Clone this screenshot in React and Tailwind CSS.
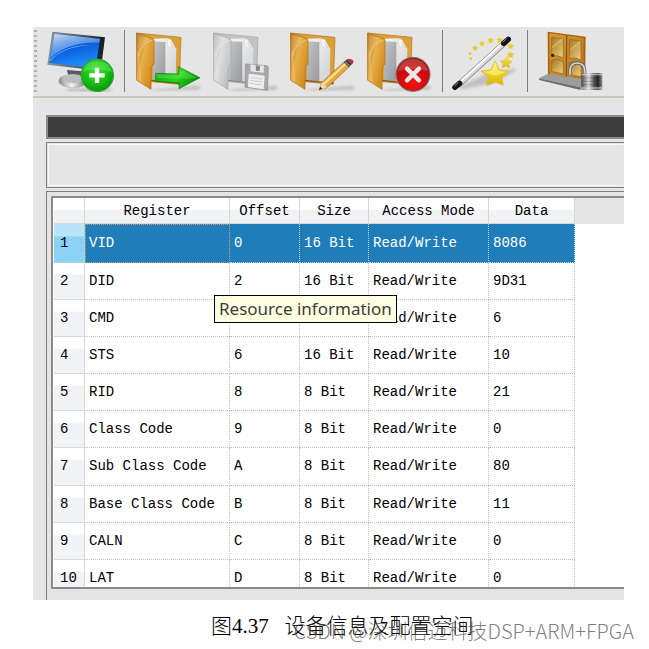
import React, { useState } from "react";

const registers = [
  { name: "VID", offset: "0", size: "16 Bit", mode: "Read/Write", data: "8086" },
  { name: "DID", offset: "2", size: "16 Bit", mode: "Read/Write", data: "9D31" },
  { name: "CMD", offset: "4", size: "16 Bit", mode: "Read/Write", data: "6" },
  { name: "STS", offset: "6", size: "16 Bit", mode: "Read/Write", data: "10" },
  { name: "RID", offset: "8", size: "8 Bit", mode: "Read/Write", data: "21" },
  { name: "Class Code", offset: "9", size: "8 Bit", mode: "Read/Write", data: "0" },
  { name: "Sub Class Code", offset: "A", size: "8 Bit", mode: "Read/Write", data: "80" },
  { name: "Base Class Code", offset: "B", size: "8 Bit", mode: "Read/Write", data: "11" },
  { name: "CALN", offset: "C", size: "8 Bit", mode: "Read/Write", data: "0" },
  { name: "LAT", offset: "D", size: "8 Bit", mode: "Read/Write", data: "0" },
];

// All the gradients live in one hidden svg so that every icon can share them
const IconDefs = () => (
  <svg className="absolute h-0 w-0" aria-hidden="true">
    <defs>
      <linearGradient id="screen" x1="0" y1="0" x2="0.3" y2="1">
        <stop offset="0" stopColor="#0b3fae" />
        <stop offset="0.5" stopColor="#0a5fdc" />
        <stop offset="1" stopColor="#1c8dfa" />
      </linearGradient>
      <linearGradient id="gloss" x1="0" y1="0" x2="0.6" y2="1">
        <stop offset="0" stopColor="#e8f3ff" stopOpacity="0.9" />
        <stop offset="1" stopColor="#6db0f8" stopOpacity="0.25" />
      </linearGradient>
      <linearGradient id="bezel" x1="0" y1="0" x2="1" y2="0">
        <stop offset="0" stopColor="#8b979c" />
        <stop offset="0.6" stopColor="#4d585c" />
        <stop offset="1" stopColor="#15191b" />
      </linearGradient>
      <linearGradient id="metal" x1="0" y1="0" x2="1" y2="0">
        <stop offset="0" stopColor="#8c8c8c" />
        <stop offset="0.45" stopColor="#f2f2f2" />
        <stop offset="1" stopColor="#6e6e6e" />
      </linearGradient>
      <radialGradient id="green" cx="0.45" cy="0.35" r="0.7">
        <stop offset="0" stopColor="#35e52a" />
        <stop offset="0.6" stopColor="#14bd10" />
        <stop offset="1" stopColor="#078c08" />
      </radialGradient>
      <radialGradient id="red" cx="0.5" cy="0.75" r="0.8">
        <stop offset="0" stopColor="#f31212" />
        <stop offset="0.6" stopColor="#cb0b0b" />
        <stop offset="1" stopColor="#8d1414" />
      </radialGradient>
      <linearGradient id="arrow" x1="0" y1="0" x2="1" y2="0.4">
        <stop offset="0" stopColor="#0ea20b" />
        <stop offset="0.6" stopColor="#25d51d" />
        <stop offset="1" stopColor="#0b9208" />
      </linearGradient>
      <linearGradient id="flap" x1="0" y1="0" x2="1" y2="0.7">
        <stop offset="0" stopColor="#b8730f" />
        <stop offset="0.45" stopColor="#e8b04c" />
        <stop offset="1" stopColor="#cf8712" />
      </linearGradient>
      <linearGradient id="flapGray" x1="0" y1="0" x2="1" y2="0.7">
        <stop offset="0" stopColor="#b5b5b5" />
        <stop offset="0.45" stopColor="#dedede" />
        <stop offset="1" stopColor="#bdbdbd" />
      </linearGradient>
      <linearGradient id="page" x1="0" y1="0" x2="1" y2="1">
        <stop offset="0" stopColor="#c4c6c9" />
        <stop offset="1" stopColor="#96989b" />
      </linearGradient>
      <linearGradient id="page2" x1="0" y1="0" x2="1" y2="1">
        <stop offset="0" stopColor="#f4f5f6" />
        <stop offset="1" stopColor="#cfd1d4" />
      </linearGradient>
      <linearGradient id="star" x1="0" y1="0" x2="0" y2="1">
        <stop offset="0" stopColor="#fff04a" />
        <stop offset="1" stopColor="#dfb40a" />
      </linearGradient>
      <linearGradient id="door" x1="0" y1="0" x2="1" y2="1">
        <stop offset="0" stopColor="#d69a35" />
        <stop offset="1" stopColor="#b9791b" />
      </linearGradient>
      <linearGradient id="panel" x1="0" y1="0" x2="1" y2="1">
        <stop offset="0" stopColor="#a87825" />
        <stop offset="1" stopColor="#ecd083" />
      </linearGradient>
      <linearGradient id="lock" x1="0" y1="0" x2="1" y2="0">
        <stop offset="0" stopColor="#4a4a4a" />
        <stop offset="0.35" stopColor="#e2e2e2" />
        <stop offset="0.6" stopColor="#555555" />
        <stop offset="0.8" stopColor="#262626" />
        <stop offset="1" stopColor="#999999" />
      </linearGradient>
      <filter id="soft" x="-20%" y="-50%" width="140%" height="200%">
        <feGaussianBlur stdDeviation="4" />
      </filter>
    </defs>
  </svg>
);

const MonitorIcon = () => (
  <svg viewBox="0 0 210 186" className="h-[62px] w-[70px]">
    <ellipse cx="130" cy="180" rx="70" ry="5" fill="#999" opacity="0.6" filter="url(#soft)" />
    <path d="M62 120L110 124L106 146L70 144Z" fill="#55595c" />
    <ellipse cx="81" cy="153" rx="43" ry="20" fill="url(#metal)" stroke="#8b8b8b" />
    <ellipse cx="82" cy="147" rx="34" ry="12" fill="#b9bcbe" />
    <path d="M19 5L177 22L164 122L4 104Z" fill="url(#bezel)" />
    <path d="M25 11L164 27L151 116L10 98Z" fill="url(#screen)" />
    <path d="M25 11L164 27L162 38Q65 35 13 85Z" fill="url(#gloss)" />
    <path d="M164 27L151 116" stroke="#0e2240" strokeWidth="4" />
    <path d="M12 90Q60 42 140 45Q52 48 12 94Z" fill="#a8d4ff" opacity="0.7" />
    <circle cx="154" cy="136" r="49" fill="url(#green)" stroke="#4c9b4c" strokeWidth="3" />
    <path d="M110 126Q118 94 154 93Q190 94 198 126Q155 112 110 126Z" fill="#8cf083" opacity="0.35" />
    <path d="M153 113V159M130 136H176" stroke="#fff" strokeWidth="13" />
  </svg>
);

const FolderIcon = ({ disabled, children }) => (
  <svg viewBox="0 0 201 186" className="h-[62px] w-[67px]">
    <path d="M45 180L190 168L192 178L60 182Z" fill="#888" opacity="0.5" filter="url(#soft)" />
    {/* back of the folder */}
    <path
      d="M2 9L135 22L130 163L46 155Z"
      fill={disabled ? "#c3c3c3" : "#dca034"}
      stroke={disabled ? "#a5a5a5" : "#a8742a"}
      strokeWidth="2"
    />
    {/* sheets of paper */}
    <path d="M53 30L88 30L90 154L50 152Z" fill="url(#page)" />
    <path d="M53 26L92 25L106 30L121 58L119 158L88 154L88 36L53 34Z" fill="url(#page2)" />
    <path d="M92 25L106 29Q103 46 108 52L121 57L120 62L96 49Z" fill="#f6f6f6" stroke="#b9bbbe" />
    <path d="M44 151L130 161" stroke={disabled ? "#888" : "#8b5713"} strokeWidth="4" />
    {/* front flap */}
    <path
      d="M1 9L41 22Q54 26 54 32L54 103Q46 105 46 114L45 178L1 150Z"
      fill={disabled ? "url(#flapGray)" : "url(#flap)"}
      stroke={disabled ? "#a6a6a6" : "#ac6e15"}
      strokeWidth="2"
    />
    <path d="M5 14L37 25Q10 55 5 105Z" fill="#fff" opacity="0.15" />
    <path d="M6 65L14 155" stroke="#fff" strokeWidth="4" opacity="0.2" />
    <path d="M8 80Q14 38 50 30" fill="none" stroke="#fff" strokeWidth="2" opacity="0.5" />
    {children}
  </svg>
);

const WandIcon = () => (
  <svg viewBox="0 0 204 186" className="h-[62px] w-[68px]">
    <path d="M25 170L110 130L195 116L192 124L125 160L35 178Z" fill="#888" opacity="0.4" filter="url(#soft)" />
    <g fill="#e9cd25">
      <circle cx="59" cy="86" r="4" />
      <circle cx="57" cy="70" r="4" />
      <path d="M72 45l3 5 6 1-4 5 1 6-6-3-6 3 1-6-4-5 6-1z" />
      <path d="M93 32l3 5 6 1-4 5 1 6-6-3-6 3 1-6-4-5 6-1z" />
      <path d="M119 22l3 5 7 1-5 5 1 7-6-3-6 3 1-7-5-5 7-1z" />
      <path d="M146 21l3 5 7 1-5 5 1 7-6-3-6 3 1-7-5-5 7-1z" />
      <path d="M179 40l3 5 7 1-5 5 1 7-6-3-6 3 1-7-5-5 7-1z" />
      <path d="M179 64l3 6 8 1-6 6 2 8-7-4-8 4 2-8-6-6 8-1z" />
    </g>
    <path d="M20 167L166 34" stroke="#77797c" strokeWidth="17" />
    <path d="M20 167L166 34" stroke="#d5d7d9" strokeWidth="13" />
    <path d="M18 164L164 31" stroke="#fff" strokeWidth="6" />
    <path d="M12 172L26 160M158 40L172 28" stroke="#111" strokeWidth="16" strokeLinecap="round" />
    <path d="M11 168L21 158M156 36L166 27" stroke="#999" strokeWidth="3" strokeLinecap="round" />
    <path
      d="M132 92L145 119L174 124L153 143L157 166L133 156L107 166L112 142L90 123L120 119Z"
      fill="url(#star)"
      stroke="#d6b42a"
      strokeWidth="2"
    />
    <path d="M132 96L141 122L165 126L132 137L99 126L122 122Z" fill="#fff58a" opacity="0.6" />
    <path
      d="M167 78L171 91L184 95L174 102L176 115L165 108L153 114L156 101L147 93L160 91Z"
      fill="url(#star)"
      stroke="#d6b42a"
    />
  </svg>
);

const DoorIcon = () => (
  <svg viewBox="0 0 201 186" className="h-[62px] w-[67px]">
    <path d="M29 5L143 20L141 158L30 140Z" fill="#a9610f" />
    <path d="M34 10L137 24L136 153L35 137Z" fill="url(#door)" />
    <path d="M86 17L85 145" stroke="#8e5510" strokeWidth="4" />
    <g fill="url(#panel)" stroke="#8e6118" strokeWidth="2">
      <path d="M41 22L76 27L76 84Q58 73 41 80Z" />
      <path d="M94 28L129 34L129 90Q110 80 94 86Z" />
      <path d="M41 91Q58 84 76 95L76 131L41 125Z" />
      <path d="M94 97Q110 92 129 101L129 140L94 134Z" />
    </g>
    <path d="M43 52L74 26M97 60L127 35" stroke="#f4dc9a" strokeWidth="5" opacity="0.4" />
    <circle cx="44" cy="76" r="5" fill="#3a2204" />
    <path d="M3 145L30 131L150 150L128 172Z" fill="#9c9c9c" />
    <path d="M3 145L128 172L128 180L3 150Z" fill="#6e6e6e" />
    <path d="M96 134V119Q99 98 119 99Q139 100 140 121V133" fill="none" stroke="#64686c" strokeWidth="10" />
    <path d="M96 134V119Q99 98 119 99Q139 100 140 121V133" fill="none" stroke="#d5d9dc" strokeWidth="5" />
    <rect x="130" y="130" width="63" height="49" rx="4" fill="url(#lock)" />
    <path d="M131 134H192M131 174H192" stroke="#ddd" strokeWidth="4" opacity="0.7" />
    <path d="M131 144H190M131 154H190M131 164H190" stroke="#222" strokeWidth="2" opacity="0.4" />
  </svg>
);

const Separator = () => <div className="h-[62px] w-px shrink-0 bg-[#7d7d7d]" />;

const ToolButton = ({ label, disabled, children }) => (
  <button type="button" aria-label={label} disabled={disabled} className="shrink-0">
    {children}
  </button>
);

const Toolbar = () => (
  <div className="flex items-center border-b-2 border-[#c9c4bd] pt-[3px] pb-1">
    {/* drag handle of the toolbar */}
    <div className="flex w-[5px] shrink-0 flex-col gap-[3px]">
      {Array.from({ length: 13 }).map((_, i) => (
        <span key={i} className="ml-px h-[2px] w-[3px] bg-[#b0b0b0]" />
      ))}
    </div>
    <div className="ml-2 flex">
      <ToolButton label="Add device">
        <MonitorIcon />
      </ToolButton>
    </div>
    <div className="ml-2">
      <Separator />
    </div>
    <div className="ml-[11px] flex gap-[10px]">
      <ToolButton label="Open">
        <FolderIcon>
          <path
            d="M59 130L127 132L127 110L192 143L129 176L129 158L59 154Z"
            fill="url(#arrow)"
            stroke="#0c7d0a"
            strokeWidth="2"
          />
          <path d="M61 133L130 135L131 117L182 143Q120 148 61 143Z" fill="#8cf57d" opacity="0.3" />
        </FolderIcon>
      </ToolButton>
      <ToolButton label="Save" disabled>
        <FolderIcon disabled>
          <path d="M98 102L160 107Q166 108 166 114L163 181L96 171Z" fill="#a9a9a9" stroke="#858585" strokeWidth="2" />
          <path d="M112 103L153 107L152 128L113 124Z" fill="#e5e5e5" />
          <path d="M128 106L141 107L140 123L129 122Z" fill="#858585" />
          <path d="M107 131L155 137L152 178L105 171Z" fill="#efefef" />
          <path d="M112 143L149 147M111 151L148 156M110 160L147 165" stroke="#bbb" strokeWidth="2" />
        </FolderIcon>
      </ToolButton>
      <ToolButton label="Edit">
        <FolderIcon>
          <path d="M87 180L96 157L165 93L181 107L111 173Z" fill="#e7a83e" stroke="#9b671d" strokeWidth="2" />
          <path d="M99 159L167 97L172 101L104 164Z" fill="#ffdd91" />
          <path d="M87 180L96 157L103 160L105 166L111 173Z" fill="#f1d5a8" />
          <path d="M87 180L91 170L97 176Z" fill="#2c1d0d" />
          <path d="M161 97L172 87L187 101L176 111Z" fill="#3b4448" />
          <path d="M165 95L179 108" stroke="#aeb8bc" strokeWidth="3" />
          <path d="M172 87Q181 85 189 91Q193 97 187 102Z" fill="#e51d2b" />
        </FolderIcon>
      </ToolButton>
      <ToolButton label="Delete">
        <FolderIcon>
          <circle cx="138" cy="133" r="51" fill="url(#red)" stroke="#777" strokeWidth="3" />
          <path d="M92 124Q100 88 138 86Q174 88 184 124Q138 110 92 124Z" fill="#fff" opacity="0.18" />
          <path d="M120 116L156 151M156 116L120 151" stroke="#e8e8e8" strokeWidth="13" strokeLinecap="round" />
        </FolderIcon>
      </ToolButton>
    </div>
    <div className="ml-2 flex items-center gap-2">
      <Separator />
      <ToolButton label="Wizard">
        <WandIcon />
      </ToolButton>
      <Separator />
    </div>
    <div className="ml-[10px] flex">
      <ToolButton label="Exit">
        <DoorIcon />
      </ToolButton>
    </div>
  </div>
);

const RegisterTable = () => {
  const [selected, setSelected] = useState(0);

  const headClass =
    "border-r border-b border-[#d8d8d8] bg-linear-to-b from-white from-45% to-[#f1f2f4] to-50% p-0 text-center font-normal";

  return (
    <table className="h-[399px] w-[521px] table-fixed border-separate border-spacing-0 font-['Liberation_Mono',monospace] text-sm leading-5 text-black">
      <colgroup>
        <col className="w-[31px]" />
        <col className="w-[145px]" />
        <col className="w-[70px]" />
        <col className="w-[69px]" />
        <col className="w-[120px]" />
        <col className="w-[86px]" />
      </colgroup>
      <thead>
        <tr className="h-[26px]">
          <th className={headClass}></th>
          <th className={headClass}>Register</th>
          <th className={headClass}>Offset</th>
          <th className={headClass}>Size</th>
          <th className={headClass}>Access Mode</th>
          <th className={headClass}>Data</th>
        </tr>
      </thead>
      <tbody>
        {registers.map((reg, index) => {
          const active = index === selected;
          // the selected row turns blue and its first cell gets the focus border
          const cell = active
            ? "border-r border-b border-dotted border-[#c4d3df] bg-[#1f7db9] p-0 pl-1 text-white"
            : "border-r border-b border-dotted border-[#c0c0c0] p-0 pl-1";
          return (
            <tr key={reg.name} onClick={() => setSelected(index)}>
              <th
                scope="row"
                className={
                  active
                    ? "border-r border-b border-[#a5d5ee] bg-linear-to-b from-[#bce4f8] from-30% to-[#8ad3f5] to-35% p-0 pl-1.5 text-left font-normal"
                    : "border-r border-b border-[#d8d8d8] bg-linear-to-b from-white from-30% to-[#f1f3f6] to-35% p-0 pl-1.5 text-left font-normal"
                }
              >
                {index + 1}
              </th>
              <td
                className={
                  active
                    ? "border border-dotted border-[#e0965f] bg-[#1f7db9] p-0 pl-[3px] text-white"
                    : cell
                }
              >
                {reg.name}
              </td>
              <td className={cell}>{reg.offset}</td>
              <td className={cell}>{reg.size}</td>
              <td className={cell}>{reg.mode}</td>
              <td className={cell}>{reg.data}</td>
            </tr>
          );
        })}
      </tbody>
    </table>
  );
};

const App = () => {
  return (
    <div className="relative min-h-screen overflow-hidden bg-white pt-[27px]">
      <IconDefs />
      <main className="mr-[25px] ml-[33px] overflow-hidden bg-[#e5e5e5]">
        <Toolbar />
        <div className="flex flex-col gap-[3px] pt-[17px] pl-[13px]">
          <div className="h-6 border-y-2 border-l-2 border-[#8b8b90] bg-[#3d3d3d]"></div>
          <div className="h-[46px] border-y border-l border-[#7d7d7d] p-px">
            <div className="h-full border-y border-l border-[#f7f7f7]"></div>
          </div>
          <div className="relative border-t border-l border-[#7d7d7d] pt-1 pb-[11px] pl-1">
            {/* scroll area, the last row is cut by its lower edge */}
            <div className="h-[393px] overflow-hidden border-y-2 border-l-2 border-[#8b8b8b] bg-white">
              <div className="flex">
                <div className="shrink-0 pl-px">
                  <RegisterTable />
                </div>
                <div className="h-[26px] flex-1 bg-[#e5e5e5]"></div>
              </div>
            </div>
            <div
              role="tooltip"
              className="absolute top-[103px] left-[167px] border border-black bg-[#ffffe1] px-1 font-['Noto_Sans',sans-serif] text-[17px] leading-[26px] whitespace-nowrap text-[#3c3c3c]"
            >
              Resource information
            </div>
          </div>
        </div>
      </main>
      <p className="mt-3 pl-[211px] font-['Liberation_Serif','Noto_Sans_CJK_SC',serif] text-[21px] leading-7 font-light whitespace-pre text-black">
        图4.37   设备信息及配置空间
      </p>
      <span className="absolute right-[15px] bottom-1.5 font-['Noto_Sans_CJK_SC',sans-serif] text-xl leading-6 font-light whitespace-nowrap text-[#444444]/70">
        CSDN @深圳信迈科技DSP+ARM+FPGA
      </span>
    </div>
  );
};

export default App;
